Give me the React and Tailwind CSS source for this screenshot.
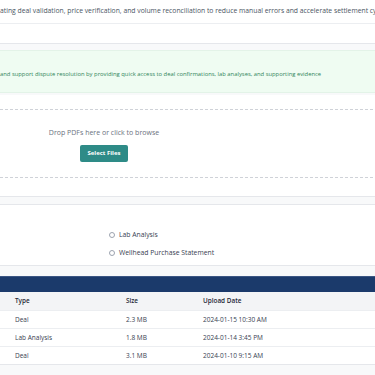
import React from "react";

const files = [
  { type: "Deal", size: "2.3 MB", date: "2024-01-15 10:30 AM" },
  { type: "Lab Analysis", size: "1.8 MB", date: "2024-01-14 3:45 PM" },
  { type: "Deal", size: "3.1 MB", date: "2024-01-10 9:15 AM" },
];

export default function App() {
  return (
    <div
      className="w-[375px] h-[375px] overflow-hidden bg-[#f8f9fa] text-[#374151]"
      style={{ fontFamily: '"Open Sans", "Noto Sans", sans-serif' }}
    >
      {/* intro card */}
      <div className="bg-white border-b border-[#e5e7eb]">
        <div className="h-[24px] flex items-center border-b border-[#eceef1] whitespace-nowrap text-[6.8px] text-[#4b5563]">
          ating deal validation, price verification, and volume reconciliation to reduce manual errors and accelerate settlement cycles
        </div>
        <div className="h-[19px]" />
      </div>

      {/* info box */}
      <div className="pt-[6px] pb-[2px]">
        <div className="h-[43px] bg-[#effcf2] border-y border-[#e3f3e8] pt-[19px] whitespace-nowrap text-[5.85px] text-[#2f855a]">
          and support dispute resolution by providing quick access to deal confirmations, lab analyses, and supporting evidence
        </div>
      </div>

      {/* upload card */}
      <div className="h-[102px] bg-white border-b border-[#e5e7eb] pt-[14px]">
        <div className="-ml-[200px] w-[608px] h-[69px] border-y border-dashed border-[#cfd2d8] flex flex-col items-center pt-[16px]">
          <p className="text-[7px] text-[#6b7280] leading-[14px]">Drop PDFs here or click to browse</p>
          <button className="mt-[5px] w-[48px] h-[17px] rounded-[2px] bg-[#2e8b87] text-white text-[6px] font-bold">
            Select Files
          </button>
        </div>
      </div>

      {/* document type card */}
      <div className="mt-[7px] h-[62px] bg-white border-y border-[#e5e7eb] pl-[109px] pt-[25px] flex flex-col gap-[9px]">
        {["Lab Analysis", "Wellhead Purchase Statement"].map((label) => (
          <label key={label} className="flex items-center gap-[4px] text-[6.8px] text-[#374151] leading-[9px]">
            <span className="w-[6px] h-[6px] rounded-full border border-[#9ca3af] bg-white" />
            {label}
          </label>
        ))}
      </div>

      {/* files table */}
      <div className="mt-[10px] bg-white border-b border-[#e5e7eb]">
        <div className="h-[16px] bg-[#1b3a6b] border-t border-[#3b5683]" />
        <div className="grid grid-cols-[111px_77px_1fr] h-[18px] items-center bg-[#f3f4f6] pl-[15px] text-[6.4px] font-semibold text-[#1f2937]">
          <span>Type</span>
          <span>Size</span>
          <span>Upload Date</span>
        </div>
        {files.map((f, i) => (
          <div
            key={i}
            className="grid grid-cols-[111px_77px_1fr] h-[18px] items-center pl-[15px] border-t border-[#eceef1] text-[6.5px] text-[#374151]"
          >
            <span>{f.type}</span>
            <span>{f.size}</span>
            <span>{f.date}</span>
          </div>
        ))}
      </div>
    </div>
  );
}
